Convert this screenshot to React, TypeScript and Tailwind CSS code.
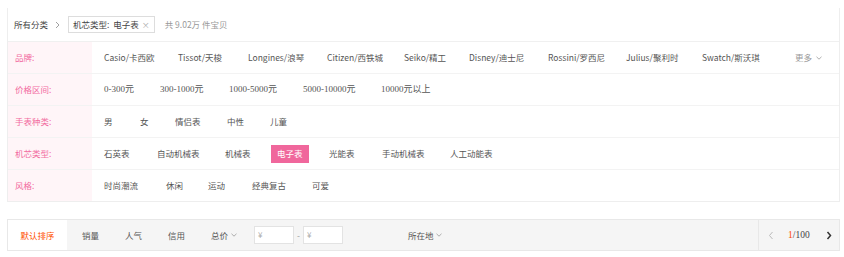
import React from 'react';

const font = { fontFamily: '"Noto Sans CJK SC", "Noto Sans", sans-serif' };

type Item = { t: string; w: string; on?: boolean };

const rows: { label: string; items: Item[]; serif?: boolean; more?: boolean }[] = [
  {
    label: '品牌:',
    more: true,
    items: [
      { t: 'Casio/卡西欧', w: 'w-[74px]' },
      { t: 'Tissot/天梭', w: 'w-[70px]' },
      { t: 'Longines/浪琴', w: 'w-[79px]' },
      { t: 'Citizen/西铁城', w: 'w-[77px]' },
      { t: 'Seiko/精工', w: 'w-[65px]' },
      { t: 'Disney/迪士尼', w: 'w-[79px]' },
      { t: 'Rossini/罗西尼', w: 'w-[78px]' },
      { t: 'Julius/聚利时', w: 'w-[76px]' },
      { t: 'Swatch/斯沃琪', w: 'w-[80px]' },
    ],
  },
  {
    label: '价格区间:',
    serif: true,
    items: [
      { t: '0-300元', w: 'w-[56px]' },
      { t: '300-1000元', w: 'w-[69px]' },
      { t: '1000-5000元', w: 'w-[74px]' },
      { t: '5000-10000元', w: 'w-[78px]' },
      { t: '10000元以上', w: 'w-[80px]' },
    ],
  },
  {
    label: '手表种类:',
    items: [
      { t: '男', w: 'w-[36px]' },
      { t: '女', w: 'w-[35px]' },
      { t: '情侣表', w: 'w-[52px]' },
      { t: '中性', w: 'w-[43px]' },
      { t: '儿童', w: 'w-[43px]' },
    ],
  },
  {
    label: '机芯类型:',
    items: [
      { t: '石英表', w: 'w-[53px]' },
      { t: '自动机械表', w: 'w-[68px]' },
      { t: '机械表', w: 'w-[52px]' },
      { t: '电子表', w: 'w-[52px]', on: true },
      { t: '光能表', w: 'w-[53px]' },
      { t: '手动机械表', w: 'w-[68px]' },
      { t: '人工动能表', w: 'w-[68px]' },
    ],
  },
  {
    label: '风格:',
    items: [
      { t: '时尚潮流', w: 'w-[62px]' },
      { t: '休闲', w: 'w-[42px]' },
      { t: '运动', w: 'w-[44px]' },
      { t: '经典复古', w: 'w-[60px]' },
      { t: '可爱', w: 'w-[40px]' },
    ],
  },
];

const rowH = ['h-[32px]', 'h-[32px]', 'h-[32px]', 'h-[32px]', 'h-[31px]'];

function Chevron({ className = '' }: { className?: string }) {
  return (
    <svg width="6" height="4" viewBox="0 0 6 4" className={className}>
      <path d="M0.5 0.8 L3 3.2 L5.5 0.8" fill="none" stroke="#999" strokeWidth="0.8" />
    </svg>
  );
}

export default function App() {
  return (
    <div className="w-[844px] h-[257px] bg-white text-[8.5px] text-[#555] overflow-hidden" style={font}>
      {/* ============ FILTER PANEL ============ */}
      <div className="ml-[7px] mt-[8px] w-[833px] border-x border-b border-[#eeeeee]">
        {/* breadcrumb */}
        <div className="h-[34px] flex items-center pl-[6px] border-b border-[#f0f0f0]">
          <span className="text-[#444]">所有分类</span>
          <svg width="5" height="8" viewBox="0 0 5 8" className="ml-[7px]">
            <path d="M1 1 L4 4 L1 7" fill="none" stroke="#888" strokeWidth="0.8" />
          </svg>
          <span className="ml-[8px] h-[17px] flex items-center px-[4px] border border-[#dddddd] text-[#444]">
            机芯类型:&nbsp;&nbsp;电子表
            <span className="ml-[3px] text-[#aaa] text-[8px]">×</span>
          </span>
          <span className="ml-[10px] text-[#999]">共 9.02万 件宝贝</span>
        </div>

        {rows.map((r, i) => (
          <div
            key={r.label}
            className={`flex ${rowH[i]} ${i < rows.length - 1 ? 'border-b border-[#f3f3f3]' : ''}`}
          >
            <div className="w-[84px] shrink-0 bg-[#fff5f8] flex items-center pl-[7px] text-[#f26b9f]">
              {r.label}
            </div>
            <div className="flex-1 flex items-center pl-[6px]">
              {r.items.map((it) => (
                <div key={it.t} className={`${it.w} shrink-0 flex`}>
                  <span
                    className={`h-[18px] flex items-center px-[6px] whitespace-nowrap ${
                      it.on ? 'bg-[#f0679c] text-white' : 'text-[#555]'
                    }`}
                    style={r.serif ? { fontFamily: '"Liberation Serif", "Noto Sans CJK SC", serif', fontSize: '9px' } : undefined}
                  >
                    {it.t}
                  </span>
                </div>
              ))}
              {r.more && (
                <div className="ml-auto pr-[17px] flex items-center gap-[4px] text-[#999]">
                  更多
                  <Chevron />
                </div>
              )}
            </div>
          </div>
        ))}
      </div>

      {/* ============ SORT BAR ============ */}
      <div className="ml-[7px] mt-[17px] w-[833px] h-[32px] flex bg-[#f5f5f5] border border-[#e8e8e8] text-[#555]">
        <div className="w-[59px] bg-white flex items-center justify-center text-[#ff5000]">默认排序</div>
        <div className="ml-[15px] w-[43px] flex items-center">销量</div>
        <div className="w-[43px] flex items-center">人气</div>
        <div className="w-[43px] flex items-center">信用</div>
        <div className="w-[43px] flex items-center gap-[3px]">
          总价
          <Chevron />
        </div>
        <div className="flex items-center">
          <div className="w-[40px] h-[18px] bg-white border border-[#e3e3e3] flex items-center pl-[3px] text-[#aaa] text-[8px]">¥</div>
          <span className="mx-[3px] text-[#999]">-</span>
          <div className="w-[40px] h-[18px] bg-white border border-[#e3e3e3] flex items-center pl-[3px] text-[#aaa] text-[8px]">¥</div>
        </div>
        <div className="ml-[65px] flex items-center gap-[3px]">
          所在地
          <Chevron />
        </div>
        <div className="ml-auto w-[81px] border-l border-[#e8e8e8] flex items-center pl-[9px]">
          <svg width="6" height="9" viewBox="0 0 6 9">
            <path d="M4.5 1 L1.5 4.5 L4.5 8" fill="none" stroke="#bbb" strokeWidth="1" />
          </svg>
          <span
            className="ml-[14px] text-[#444]"
            style={{ fontFamily: '"Liberation Serif", serif', fontSize: '9.5px' }}
          >
            <span className="text-[#ff4400]">1</span>/100
          </span>
          <svg width="6" height="9" viewBox="0 0 6 9" className="ml-[16px]">
            <path d="M1.5 1 L4.5 4.5 L1.5 8" fill="none" stroke="#333" strokeWidth="1.5" />
          </svg>
        </div>
      </div>
    </div>
  );
}
